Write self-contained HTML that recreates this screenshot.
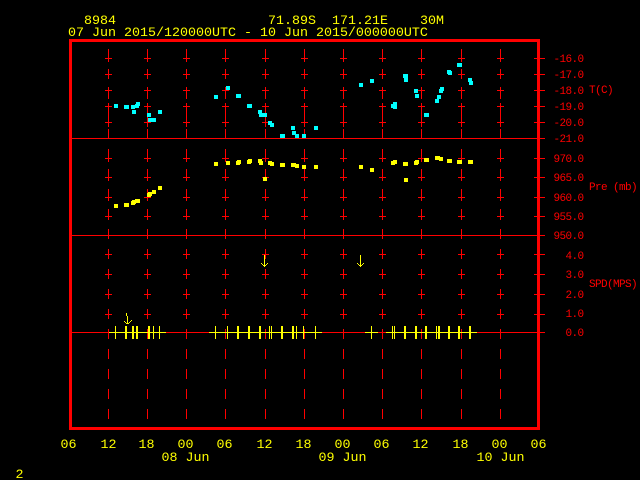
<!DOCTYPE html>
<html>
<head>
<meta charset="utf-8">
<style>
html,body{margin:0;padding:0;background:#000;width:640px;height:480px;overflow:hidden}
svg{display:block;position:absolute;left:0;top:0}
.y{font:13.33px "Liberation Mono",monospace;fill:#ffff00;white-space:pre}
.r{font:11px "Liberation Mono",monospace;letter-spacing:-0.6px;fill:#ff0000;white-space:pre}
</style>
</head>
<body>
<svg width="640" height="480" viewBox="0 0 640 480" shape-rendering="crispEdges">
<defs>
<g id="col" fill="#f00">
<rect x="0" y="49" width="1" height="13"/><rect x="0" y="69" width="1" height="10"/><rect x="0" y="87" width="1" height="12"/><rect x="0" y="103" width="1" height="24"/><rect x="0" y="129" width="1" height="9"/>
<rect x="0" y="149" width="1" height="13"/><rect x="0" y="169" width="1" height="12"/><rect x="0" y="189" width="1" height="12"/><rect x="0" y="209" width="1" height="11"/><rect x="0" y="229" width="1" height="10"/>
<rect x="0" y="249" width="1" height="10"/><rect x="0" y="269" width="1" height="10"/><rect x="0" y="289" width="1" height="10"/><rect x="0" y="309" width="1" height="10"/><rect x="0" y="329" width="1" height="10"/>
<rect x="0" y="349" width="1" height="10"/><rect x="0" y="369" width="1" height="10"/><rect x="0" y="389" width="1" height="10"/><rect x="0" y="409" width="1" height="10"/>
<rect x="-3" y="58" width="7" height="1"/><rect x="-3" y="74" width="7" height="1"/><rect x="-3" y="90" width="7" height="1"/><rect x="-3" y="106" width="7" height="1"/><rect x="-3" y="122" width="7" height="1"/>
<rect x="-3" y="158" width="7" height="1"/><rect x="-3" y="177" width="7" height="1"/><rect x="-3" y="197" width="7" height="1"/><rect x="-3" y="216" width="7" height="1"/>
<rect x="-3" y="254" width="7" height="1"/><rect x="-3" y="274" width="7" height="1"/><rect x="-3" y="294" width="7" height="1"/><rect x="-3" y="314" width="7" height="1"/>
</g>
</defs>
<rect width="640" height="480" fill="#000"/>
<use href="#col" x="108"/><use href="#col" x="147"/><use href="#col" x="186"/><use href="#col" x="225"/><use href="#col" x="265"/><use href="#col" x="304"/><use href="#col" x="343"/><use href="#col" x="382"/><use href="#col" x="421"/><use href="#col" x="461"/><use href="#col" x="500"/>
<g fill="#f00">
<rect x="69" y="39" width="471" height="3"/><rect x="69" y="427" width="471" height="3"/><rect x="69" y="39" width="3" height="391"/><rect x="537" y="39" width="3" height="391"/>
<rect x="72" y="138" width="473" height="1"/><rect x="72" y="235" width="473" height="1"/><rect x="72" y="332" width="473" height="1"/>
<rect x="534" y="58" width="11" height="1"/><rect x="534" y="74" width="11" height="1"/><rect x="534" y="90" width="11" height="1"/><rect x="534" y="106" width="11" height="1"/><rect x="534" y="122" width="11" height="1"/>
<rect x="534" y="158" width="11" height="1"/><rect x="534" y="177" width="11" height="1"/><rect x="534" y="197" width="11" height="1"/><rect x="534" y="216" width="11" height="1"/>
<rect x="534" y="254" width="11" height="1"/><rect x="534" y="274" width="11" height="1"/><rect x="534" y="294" width="11" height="1"/><rect x="534" y="314" width="11" height="1"/>
</g>
<g fill="#0ff">
<rect x="114" y="104" width="4" height="4"/><rect x="124" y="105" width="5" height="4"/><rect x="131" y="105" width="4" height="4"/><rect x="135" y="104" width="4" height="4"/><rect x="136" y="102" width="4" height="4"/><rect x="132" y="110" width="4" height="4"/><rect x="147" y="113" width="4" height="4"/><rect x="148" y="118" width="8" height="4"/><rect x="158" y="110" width="4" height="4"/>
<rect x="214" y="95" width="4" height="4"/><rect x="226" y="86" width="4" height="4"/><rect x="236" y="94" width="5" height="4"/><rect x="247" y="104" width="5" height="4"/><rect x="258" y="110" width="4" height="4"/><rect x="259" y="113" width="8" height="4"/><rect x="268" y="121" width="4" height="4"/><rect x="270" y="123" width="4" height="4"/><rect x="280" y="134" width="5" height="4"/><rect x="291" y="126" width="4" height="4"/><rect x="292" y="131" width="4" height="4"/><rect x="295" y="134" width="4" height="4"/><rect x="302" y="134" width="4" height="4"/><rect x="314" y="126" width="4" height="4"/>
<rect x="359" y="83" width="4" height="4"/><rect x="370" y="79" width="4" height="4"/><rect x="403" y="74" width="5" height="4"/><rect x="404" y="78" width="4" height="4"/><rect x="414" y="89" width="4" height="4"/><rect x="415" y="94" width="4" height="4"/><rect x="391" y="104" width="4" height="4"/><rect x="393" y="102" width="4" height="7"/><rect x="424" y="113" width="5" height="4"/><rect x="435" y="99" width="4" height="4"/><rect x="437" y="95" width="4" height="4"/><rect x="439" y="89" width="4" height="4"/><rect x="440" y="87" width="4" height="4"/><rect x="447" y="70" width="4" height="4"/><rect x="448" y="71" width="4" height="4"/><rect x="457" y="63" width="5" height="4"/><rect x="468" y="78" width="4" height="4"/><rect x="469" y="81" width="4" height="4"/>
</g>
<g fill="#ff0">
<rect x="114" y="204" width="4" height="4"/><rect x="124" y="203" width="5" height="4"/><rect x="131" y="201" width="4" height="4"/><rect x="132" y="200" width="4" height="4"/><rect x="135" y="199" width="5" height="4"/><rect x="147" y="193" width="4" height="4"/><rect x="148" y="192" width="4" height="4"/><rect x="152" y="190" width="4" height="4"/><rect x="158" y="186" width="4" height="4"/>
<rect x="214" y="162" width="4" height="4"/><rect x="226" y="161" width="4" height="4"/><rect x="236" y="161" width="4" height="4"/><rect x="237" y="160" width="4" height="4"/><rect x="247" y="160" width="4" height="4"/><rect x="248" y="159" width="4" height="4"/><rect x="258" y="159" width="4" height="4"/><rect x="259" y="161" width="4" height="4"/><rect x="268" y="161" width="4" height="4"/><rect x="270" y="162" width="4" height="4"/><rect x="280" y="163" width="5" height="4"/><rect x="291" y="163" width="5" height="4"/><rect x="295" y="164" width="4" height="4"/><rect x="302" y="165" width="4" height="4"/><rect x="314" y="165" width="4" height="4"/><rect x="263" y="177" width="4" height="4"/>
<rect x="359" y="165" width="4" height="4"/><rect x="370" y="168" width="4" height="4"/><rect x="391" y="161" width="4" height="4"/><rect x="393" y="160" width="4" height="4"/><rect x="403" y="162" width="5" height="4"/><rect x="404" y="178" width="4" height="4"/><rect x="414" y="161" width="4" height="4"/><rect x="415" y="160" width="4" height="4"/><rect x="424" y="158" width="5" height="4"/><rect x="435" y="156" width="5" height="4"/><rect x="439" y="157" width="4" height="4"/><rect x="447" y="159" width="5" height="4"/><rect x="457" y="160" width="5" height="4"/><rect x="468" y="160" width="5" height="4"/>
<rect x="109" y="332" width="57" height="1"/><rect x="209" y="332" width="113" height="1"/><rect x="365" y="332" width="13" height="1"/><rect x="386" y="332" width="91" height="1"/>
<rect x="115" y="326" width="1" height="13"/><rect x="125" y="326" width="2" height="13"/><rect x="132" y="326" width="2" height="13"/><rect x="136" y="326" width="2" height="13"/><rect x="148" y="326" width="2" height="13"/><rect x="153" y="326" width="1" height="13"/><rect x="159" y="326" width="1" height="13"/>
<rect x="215" y="326" width="1" height="13"/><rect x="227" y="326" width="1" height="13"/><rect x="237" y="326" width="2" height="13"/><rect x="248" y="326" width="2" height="13"/><rect x="259" y="326" width="2" height="13"/><rect x="269" y="326" width="1" height="13"/><rect x="271" y="326" width="1" height="13"/><rect x="281" y="326" width="2" height="13"/><rect x="292" y="326" width="2" height="13"/><rect x="296" y="326" width="1" height="13"/><rect x="303" y="326" width="1" height="13"/><rect x="315" y="326" width="1" height="13"/>
<rect x="371" y="326" width="1" height="13"/><rect x="392" y="326" width="1" height="13"/><rect x="394" y="326" width="1" height="13"/><rect x="404" y="326" width="2" height="13"/><rect x="415" y="326" width="2" height="13"/><rect x="425" y="326" width="2" height="13"/><rect x="436" y="326" width="1" height="13"/><rect x="438" y="326" width="2" height="13"/><rect x="448" y="326" width="2" height="13"/><rect x="458" y="326" width="2" height="13"/><rect x="469" y="326" width="2" height="13"/>
<rect x="126" y="313" width="1" height="3"/><rect x="127" y="316" width="1" height="8"/><rect x="124" y="321" width="1" height="1"/><rect x="125" y="322" width="1" height="1"/><rect x="126" y="323" width="3" height="1"/><rect x="129" y="322" width="1" height="1"/><rect x="130" y="321" width="1" height="1"/><rect x="131" y="320" width="1" height="1"/>
<rect x="264" y="255" width="1" height="12"/><rect x="261" y="263" width="1" height="1"/><rect x="262" y="264" width="1" height="1"/><rect x="263" y="265" width="1" height="1"/><rect x="265" y="265" width="1" height="1"/><rect x="266" y="264" width="1" height="1"/><rect x="267" y="263" width="1" height="1"/>
<rect x="360" y="255" width="1" height="12"/><rect x="357" y="263" width="1" height="1"/><rect x="358" y="264" width="1" height="1"/><rect x="359" y="265" width="1" height="1"/><rect x="361" y="265" width="1" height="1"/><rect x="362" y="264" width="1" height="1"/><rect x="363" y="263" width="1" height="1"/>
</g>
<g shape-rendering="auto">
<text class="y" x="84" y="24">8984</text>
<text class="y" x="268" y="24">71.89S</text>
<text class="y" x="332" y="24">171.21E</text>
<text class="y" x="420" y="24">30M</text>
<text class="y" x="68" y="36">07 Jun 2015/120000UTC - 10 Jun 2015/000000UTC</text>
<text class="y" x="60.5" y="448">06</text><text class="y" x="100.5" y="448">12</text><text class="y" x="138.5" y="448">18</text><text class="y" x="177.5" y="448">00</text><text class="y" x="216.5" y="448">06</text><text class="y" x="256.5" y="448">12</text><text class="y" x="295.5" y="448">18</text><text class="y" x="334.5" y="448">00</text><text class="y" x="373.5" y="448">06</text><text class="y" x="412.5" y="448">12</text><text class="y" x="452.5" y="448">18</text><text class="y" x="491.5" y="448">00</text><text class="y" x="530.5" y="448">06</text>
<text class="y" x="161.5" y="461">08 Jun</text><text class="y" x="318.5" y="461">09 Jun</text><text class="y" x="476.5" y="461">10 Jun</text>
<text class="y" x="15.5" y="478">2</text>
<text class="r" x="553.5" y="62">-16.0</text><text class="r" x="553.5" y="78">-17.0</text><text class="r" x="553.5" y="94">-18.0</text><text class="r" x="553.5" y="110">-19.0</text><text class="r" x="553.5" y="126">-20.0</text><text class="r" x="553.5" y="142">-21.0</text>
<text class="r" x="553.5" y="162">970.0</text><text class="r" x="553.5" y="181">965.0</text><text class="r" x="553.5" y="201">960.0</text><text class="r" x="553.5" y="220">955.0</text><text class="r" x="553.5" y="239">950.0</text>
<text class="r" x="565.5" y="259">4.0</text><text class="r" x="565.5" y="278">3.0</text><text class="r" x="565.5" y="298">2.0</text><text class="r" x="565.5" y="317">1.0</text><text class="r" x="565.5" y="336">0.0</text>
<text class="r" x="589" y="93">T(C)</text><text class="r" x="589" y="190">Pre (mb)</text><text class="r" x="589" y="287">SPD(MPS)</text>
</g>
</svg>
</body>
</html>
